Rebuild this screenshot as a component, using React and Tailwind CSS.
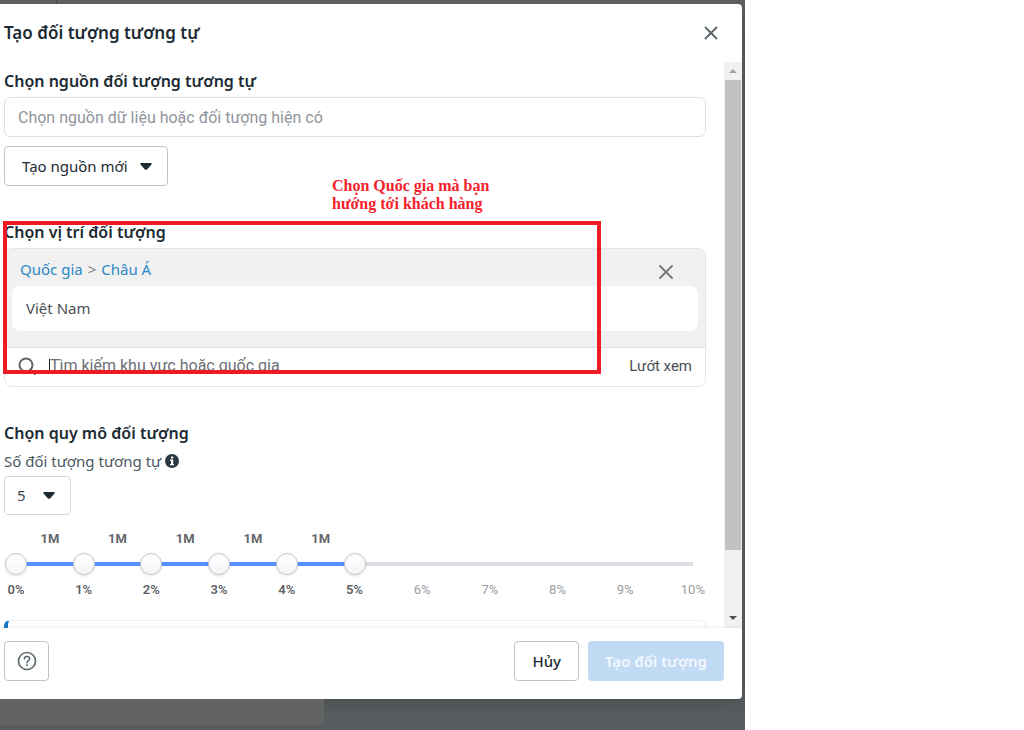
import React, { useState } from 'react';
import { X } from 'lucide-react';

const STEPS = [0, 1, 2, 3, 4, 5, 6, 7, 8, 9, 10];

const Caret = () => (
  <svg className="w-3 h-[7px] flex-shrink-0" viewBox="0 0 14 8" fill="#1c2b33" aria-hidden="true">
    <path d="M1.4 0h11.2c1 0 1.5 1 .8 1.8L8.2 7.4c-.7.7-1.7.7-2.4 0L.6 1.8C-.1 1 .4 0 1.4 0z" />
  </svg>
);

const SearchIcon = () => (
  <svg className="w-[18px] h-[18px] flex-shrink-0" viewBox="0 0 18 18" fill="none" stroke="#5f6469" strokeWidth="2" aria-hidden="true">
    <circle cx="8" cy="8" r="6.5" />
    <path d="M12.5 12.5l4.5 4.5" strokeLinecap="round" />
  </svg>
);

const InfoIcon = () => (
  <svg className="w-[14px] h-[14px]" viewBox="0 0 14 14" aria-hidden="true">
    <circle cx="7" cy="7" r="7" fill="#2b3a42" />
    <path d="M6 2.5h2.2v2H6zM5 5.6h3.2v4.400H9v1.300H5V10h1V6.900H5z" fill="#fff" />
  </svg>
);

const HelpIcon = () => (
  <svg className="w-5 h-5" viewBox="0 0 20 20" fill="none" stroke="#606b70" aria-hidden="true">
    <circle cx="10" cy="10" r="8.5" strokeWidth="1.7" />
    <path d="M7.3 8c0-1.600 1.100-2.600 2.700-2.600s2.700.9 2.700 2.300c0 1.900-2.600 1.900-2.600 4" strokeWidth="1.5" strokeLinecap="round" />
    <circle cx="10" cy="14.2" r="1" fill="#606b70" stroke="none" />
  </svg>
);

const SectionTitle = ({ children }) => (
  <h2 className="text-base leading-[22px] font-semibold text-[#1c2b33]">{children}</h2>
);

const AudienceSlider = ({ count }) => (
  <div className="ml-px mr-[2px] mt-[14px] font-[Roboto,sans-serif] text-[13px] leading-5">
    <div className="grid grid-cols-10 px-[11px] text-center font-bold text-[#65676b]">
      {STEPS.slice(0, count).map((step) => (
        <span key={step}>1M</span>
      ))}
    </div>
    <div className="relative h-[30px] flex items-center px-[11px]">
      <div className="w-full h-1 bg-[#dddfe6]">
        <div className="h-1 bg-[#5890ff]" style={{ width: `${count * 10}%` }} />
      </div>
      {STEPS.slice(0, count + 1).map((step) => (
        <input
          key={step}
          type="range"
          min="0"
          max="10"
          defaultValue={step}
          aria-label={`Mốc ${step}%`}
          className="absolute inset-x-0 top-1 w-full h-[22px] m-0 appearance-none bg-transparent pointer-events-none [&::-webkit-slider-thumb]:pointer-events-auto [&::-webkit-slider-thumb]:appearance-none [&::-webkit-slider-thumb]:w-[22px] [&::-webkit-slider-thumb]:h-[22px] [&::-webkit-slider-thumb]:rounded-full [&::-webkit-slider-thumb]:border [&::-webkit-slider-thumb]:border-[#c4c6ca] [&::-webkit-slider-thumb]:bg-linear-to-b [&::-webkit-slider-thumb]:from-white [&::-webkit-slider-thumb]:to-[#f4f5f7] [&::-webkit-slider-thumb]:shadow-sm"
        />
      ))}
    </div>
    <div className="flex justify-between pt-px">
      {STEPS.map((step) => (
        <span
          key={step}
          className={`w-[22px] flex justify-center ${step <= count ? 'font-semibold text-[#606266]' : 'text-[#9a9ca1]'}`}
        >
          {step}%
        </span>
      ))}
    </div>
  </div>
);

const Scrollbar = () => (
  <div className="w-[18px] flex-shrink-0 bg-[#f1f1f1] flex flex-col items-center" aria-hidden="true">
    <div className="h-[18px] flex items-center">
      <svg className="w-2 h-1" viewBox="0 0 8 4" fill="#a3a3a3"><path d="M0 4l4-4 4 4z" /></svg>
    </div>
    <div className="flex-1 w-full px-px">
      <div className="h-[89%] bg-[#c1c1c1]" />
    </div>
    <div className="h-[20px] flex items-center">
      <svg className="w-2 h-1" viewBox="0 0 8 4" fill="#505050"><path d="M0 0l4 4 4-4z" /></svg>
    </div>
  </div>
);

const App = () => {
  const [count, setCount] = useState(5);

  return (
    <div className="min-h-screen bg-white font-['Noto_Sans',sans-serif] text-[#1c2b33]">
      <div className="w-full max-w-[745px] h-screen min-h-[640px] bg-[#575d5e] flex flex-col overflow-hidden">
        <div className="h-1 flex-shrink-0 bg-[#5f5d60] flex">
          <div className="w-[57px] border-r border-[#4d4c4e]" />
        </div>

        <div role="dialog" aria-labelledby="dialog-title" className="flex-1 min-h-0 mr-[3px] bg-white rounded-r-[4px] flex flex-col shadow-lg">
          <header className="h-[58px] flex-shrink-0 flex items-center justify-between pl-1 pr-5">
            <h1 id="dialog-title" className="text-[17px] leading-6 font-semibold">Tạo đối tượng tương tự</h1>
            <button type="button" aria-label="Đóng" className="text-[#5b666d]">
              <X className="w-[22px] h-[22px]" strokeWidth={2} />
            </button>
          </header>

          <div className="flex-1 min-h-0 flex">
            <div className="flex-1 min-w-0 overflow-hidden pl-1 pr-[18px] pt-2">
              <SectionTitle>
                <label htmlFor="source">Chọn nguồn đối tượng tương tự</label>
              </SectionTitle>
              <input
                id="source"
                type="text"
                placeholder="Chọn nguồn dữ liệu hoặc đối tượng hiện có"
                className="block w-full h-10 mt-[5px] px-[13px] border border-[#dddfe2] rounded-md font-[Roboto,sans-serif] text-base placeholder:text-[#90949c]"
              />
              <button type="button" className="h-10 mt-[9px] pl-[17px] pr-[15px] border border-[#bcc4d0] rounded-[4px] flex items-center gap-3 text-[15px]">
                Tạo nguồn mới
                <Caret />
              </button>

              <section className="relative mt-[35px]">
                <SectionTitle>Chọn vị trí đối tượng</SectionTitle>
                <div className="mt-[5px] border border-[#e4e5e7] rounded-lg overflow-hidden">
                  <div className="bg-[#f1f1f1] px-[7px] pb-4 border-b border-[#e0e1e3]">
                    <div className="h-[37px] pt-1 pl-2 pr-5 flex items-center justify-between">
                      <nav className="flex gap-[5px] text-[15px] text-[#2d88c8]" aria-label="Khu vực">
                        <a href="#countries">Quốc gia</a>
                        <span className="text-[#7b7f85]">&gt;</span>
                        <a href="#asia">Châu Á</a>
                      </nav>
                      <button type="button" aria-label="Xóa" className="mt-1 text-[#777b80]">
                        <X className="w-6 h-6" strokeWidth={2} />
                      </button>
                    </div>
                    <div className="h-[45px] px-[14px] bg-white rounded-lg flex items-center text-[15px] text-[#4b4f56]">
                      Việt Nam
                    </div>
                  </div>
                  <div className="h-[38px] pb-[2px] pl-[13px] pr-[13px] flex items-center">
                    <SearchIcon />
                    <span className="w-px h-[14px] ml-[13px] bg-[#1c1e21]" />
                    <input
                      type="text"
                      aria-label="Tìm kiếm khu vực"
                      placeholder="Tìm kiếm khu vực hoặc quốc gia"
                      className="flex-1 min-w-0 font-[Roboto,sans-serif] text-base placeholder:text-[#6b6f76]"
                    />
                    <button type="button" className="font-[Roboto,sans-serif] text-[15px] text-[#4b4f56]">Lướt xem</button>
                  </div>
                </div>

                {/* callout over the location picker */}
                <p className="absolute left-[328px] -top-11 w-[180px] font-['Liberation_Serif',serif] font-bold text-base leading-[18px] text-[#f5222b]">
                  Chọn Quốc gia mà bạn hướng tới khách hàng
                </p>
                <div className="absolute -left-px right-[105px] top-0 h-[153px] border-4 border-[#ed1c24] pointer-events-none" />
              </section>

              <section className="mt-[35px]">
                <SectionTitle>Chọn quy mô đối tượng</SectionTitle>
                <div className="mt-[5px] flex items-center gap-1 text-[15px] leading-6 text-[#4b585f]">
                  <label htmlFor="count">Số đối tượng tương tự</label>
                  <InfoIcon />
                </div>
                <div className="relative w-[67px] mt-[3px]">
                  <select
                    id="count"
                    value={count}
                    onChange={(e) => setCount(Number(e.target.value))}
                    className="block w-full h-[39px] pl-3 appearance-none border border-[#d3d8e0] rounded-[4px] bg-white text-[15px] text-[#3b4950]"
                  >
                    {[1, 2, 3, 4, 5, 6].map((n) => (
                      <option key={n} value={n}>{n}</option>
                    ))}
                  </select>
                  <span className="absolute right-4 inset-y-0 flex items-center pointer-events-none">
                    <Caret />
                  </span>
                </div>
                <AudienceSlider count={count} />
              </section>

              <div className="mt-5 h-20 border border-[#eeeff1] border-l-4 border-l-[#1877c2] rounded-md shadow-sm" />
            </div>
            <Scrollbar />
          </div>

          <footer className="h-[71px] flex-shrink-0 pt-[13px] pl-1 pr-[18px] flex items-start gap-[9px] shadow-[0_-1px_3px_rgba(0,0,0,0.06)] text-[15px] font-medium">
            <button type="button" aria-label="Trợ giúp" className="w-[45px] h-10 mr-auto border border-[#bcc4d0] rounded-[4px] flex items-center justify-center">
              <HelpIcon />
            </button>
            <button type="button" className="h-10 px-[17px] border border-[#bcc4d0] rounded-[4px]">Hủy</button>
            <button type="button" disabled className="h-10 px-[17px] rounded-[4px] bg-[#c2dbf5] font-semibold text-[#f2f8fe]">
              Tạo đối tượng
            </button>
          </footer>
        </div>

        <div className="h-[31px] flex-shrink-0">
          <div className="w-[324px] h-[26px] bg-[#636363] rounded-br-[4px]" />
        </div>
      </div>
    </div>
  );
};

export default App;
